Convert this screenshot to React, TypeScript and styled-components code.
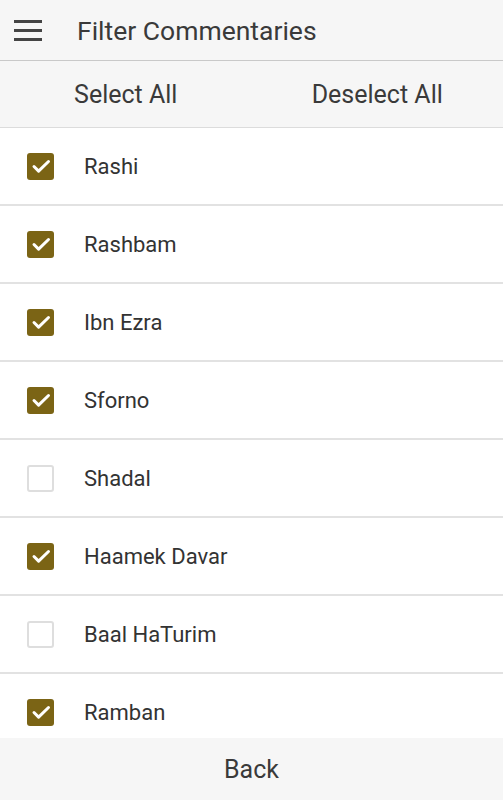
import React, { useState } from "react";
import styled, { createGlobalStyle } from "styled-components";

const COMMENTARIES = [
  { id: "rashi", label: "Rashi", on: true },
  { id: "rashbam", label: "Rashbam", on: true },
  { id: "ibn-ezra", label: "Ibn Ezra", on: true },
  { id: "sforno", label: "Sforno", on: true },
  { id: "shadal", label: "Shadal", on: false },
  { id: "haamek", label: "Haamek Davar", on: true },
  { id: "baal", label: "Baal HaTurim", on: false },
  { id: "ramban", label: "Ramban", on: true },
];

const Global = createGlobalStyle`
  html, body {
    margin: 0;
    padding: 0;
    height: 100%;
  }
  body {
    font-family: Roboto, "Liberation Sans", sans-serif;
    color: #333;
    background: #fff;
  }
  #root {
    height: 100%;
  }
`;

const Screen = styled.div`
  display: flex;
  flex-direction: column;
  height: 800px;
  overflow: hidden;
`;

const TopBar = styled.header`
  display: flex;
  align-items: center;
  gap: 35px;
  height: 60px;
  padding: 0 14px;
  background: #f6f6f6;
  border-bottom: 1px solid #c9c9c9;
  flex-shrink: 0;
`;

const MenuButton = styled.button`
  display: flex;
  flex-direction: column;
  gap: 6px;
  background: none;
  border: none;
  padding: 0;
  cursor: pointer;

  span {
    width: 28px;
    height: 3px;
    background: #444;
  }
`;

const Title = styled.h1`
  margin: 0;
  font-size: 26.5px;
  font-weight: 400;
  color: #3a3a3a;
`;

const BulkRow = styled.div`
  display: grid;
  grid-template-columns: 1fr 1fr;
  height: 66px;
  background: #f6f6f6;
  border-bottom: 1px solid #dcdcdc;
  flex-shrink: 0;
`;

const BulkButton = styled.button`
  background: none;
  border: none;
  font-family: inherit;
  font-size: 25px;
  color: #3a3a3a;
  cursor: pointer;
`;

const List = styled.div`
  flex: 1;
  overflow: hidden;
`;

const Item = styled.label`
  display: flex;
  align-items: center;
  gap: 30px;
  height: 76px;
  padding: 0 27px;
  border-bottom: 2px solid #e2e2e2;
  cursor: pointer;
`;

const Box = styled.span<{ $on: boolean }>`
  display: flex;
  align-items: center;
  justify-content: center;
  width: 27px;
  height: 27px;
  box-sizing: border-box;
  border-radius: 3px;
  background: ${({ $on }) => ($on ? "#7b6415" : "#fff")};
  border: ${({ $on }) => ($on ? "none" : "2px solid #dedede")};
  flex-shrink: 0;
`;

const ItemLabel = styled.span`
  font-size: 22px;
  color: #333;
`;

const Footer = styled.button`
  height: 62px;
  flex-shrink: 0;
  background: #f6f6f6;
  border: none;
  font-family: inherit;
  font-size: 25px;
  color: #3a3a3a;
  cursor: pointer;
`;

const Check = () => (
  <svg width="24" height="24" viewBox="0 0 24 24" fill="none">
    <path d="M5 12.5l4.6 4.6L19.5 7.5" stroke="#fff" strokeWidth="3" strokeLinecap="round" strokeLinejoin="round" />
  </svg>
);

const App: React.FC = () => {
  const [checked, setChecked] = useState<Record<string, boolean>>(
    Object.fromEntries(COMMENTARIES.map((c) => [c.id, c.on]))
  );

  const setAll = (value: boolean) =>
    setChecked(Object.fromEntries(COMMENTARIES.map((c) => [c.id, value])));

  return (
    <>
      <Global />
      <Screen>
        <TopBar>
          <MenuButton aria-label="Menu">
            <span />
            <span />
            <span />
          </MenuButton>
          <Title>Filter Commentaries</Title>
        </TopBar>

        <BulkRow>
          <BulkButton onClick={() => setAll(true)}>Select All</BulkButton>
          <BulkButton onClick={() => setAll(false)}>Deselect All</BulkButton>
        </BulkRow>

        <List>
          {COMMENTARIES.map((c) => (
            <Item
              key={c.id}
              onClick={() => setChecked((prev) => ({ ...prev, [c.id]: !prev[c.id] }))}
            >
              <Box $on={checked[c.id]}>{checked[c.id] && <Check />}</Box>
              <ItemLabel>{c.label}</ItemLabel>
            </Item>
          ))}
        </List>

        <Footer>Back</Footer>
      </Screen>
    </>
  );
};

export default App;
